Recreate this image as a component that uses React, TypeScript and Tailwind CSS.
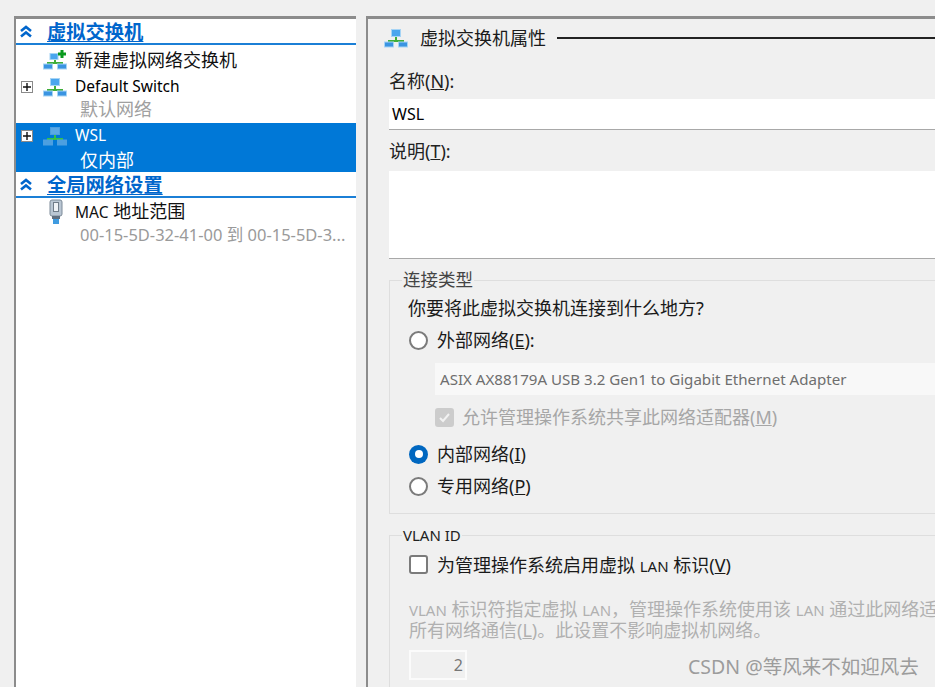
import React from "react";

const FONT = "font-['Noto_Sans','Noto_Sans_CJK_SC',sans-serif]";

function Lat({ children }: { children: React.ReactNode }) {
  return <span className="text-[15.5px]">{children}</span>;
}

function SwitchIcon({ plus = false, dim = false }: { plus?: boolean; dim?: boolean }) {
  const top = dim ? "#5aa9e6" : "#4aa6ee";
  const low = dim ? "#4c9fe0" : "#3a94e2";
  const edge = dim ? "#4c9fe0" : "#a6d4f5";
  return (
    <svg width="24" height="20" viewBox="0 0 24 20">
      <path d="M12 7V13M5 15V13H19V15" stroke={dim ? "#35c04a" : "#3fae3a"} strokeWidth="2" fill="none" />
      {!plus && <rect x="7.5" y="1.5" width="9" height="7" fill={top} stroke={edge} strokeWidth="1" />}
      {plus && <rect x="7" y="3.5" width="8" height="6" fill={top} stroke={edge} strokeWidth="1" />}
      <rect x="0.5" y="14" width="9" height="5" fill={low} stroke={edge} strokeWidth="1" />
      <rect x="14.5" y="14" width="9" height="5" fill={low} stroke={edge} strokeWidth="1" />
      {plus && <path d="M19 0V8M15 4H23" stroke="#0a9a1f" strokeWidth="3" />}
    </svg>
  );
}

function Chevrons() {
  return (
    <svg width="14" height="13" viewBox="0 0 14 13">
      <path d="M2 6L7 2L12 6M2 11.5L7 7.5L12 11.5" stroke="#0066cc" strokeWidth="2.6" fill="none" />
    </svg>
  );
}

function PlusBox() {
  return (
    <div className="flex h-[12px] w-[12px] items-center justify-center border border-[#8a8a8a] bg-white">
      <svg width="8" height="8" viewBox="0 0 8 8">
        <path d="M4 0V8M0 4H8" stroke="#111" strokeWidth="1.4" />
      </svg>
    </div>
  );
}

function MacIcon() {
  return (
    <svg width="14" height="25" viewBox="0 0 14 25">
      <rect x="1" y="1" width="12" height="16" rx="2" fill="#b9c6d3" stroke="#7d8b99" />
      <rect x="4.5" y="3.5" width="5" height="9" fill="#eef2f6" stroke="#6f7c89" />
      <rect x="3" y="17" width="8" height="3" fill="#5f6f80" />
      <rect x="4" y="20" width="6" height="5" fill="#3f9be0" />
    </svg>
  );
}

function Heading({ children }: { children: React.ReactNode }) {
  return (
    <div className="flex h-[26px] items-center border-b-2 border-[#1b7fd6]">
      <div className="flex w-[31px] pl-[3px]">
        <Chevrons />
      </div>
      <span className="pt-[1px] text-[19.3px] leading-none font-bold text-[#0066cc] underline underline-offset-2">{children}</span>
    </div>
  );
}

function Radio({ checked = false }: { checked?: boolean }) {
  return checked ? (
    <div className="flex h-[19px] w-[19px] items-center justify-center rounded-full bg-[#0067c0]">
      <div className="h-[8px] w-[8px] rounded-full bg-white" />
    </div>
  ) : (
    <div className="h-[19px] w-[19px] rounded-full border-2 border-[#7b7b7b] bg-white" />
  );
}

function Option({ checked, children, h }: { checked?: boolean; children: React.ReactNode; h: string }) {
  return (
    <div className={`flex items-center gap-[9px] pl-[19px] text-[18px] leading-none text-[#1a1a1a] ${h}`}>
      <Radio checked={checked} />
      <span>{children}</span>
    </div>
  );
}

export default function App() {
  return (
    <div className={`relative flex h-[687px] w-[935px] gap-[10px] overflow-hidden bg-[#f0f0f0] pt-[16px] pl-[14px] ${FONT}`}>
      {/* Left tree panel */}
      <div className="h-[671px] w-[342px] shrink-0 border-t-[3px] border-l-[2px] border-[#8c8c8c] bg-white">
        <Heading>虚拟交换机</Heading>
        <div className="flex h-[30px] items-center">
          <div className="w-[27px]" />
          <div className="flex w-[32px]">
            <SwitchIcon plus />
          </div>
          <span className="text-[18px] leading-none text-[#111]">新建虚拟网络交换机</span>
        </div>
        <div className="h-[48px]">
          <div className="flex h-[23px] items-center">
            <div className="w-[27px] pl-[5px]">
              <PlusBox />
            </div>
            <div className="flex w-[32px]">
              <SwitchIcon />
            </div>
            <Lat>Default Switch</Lat>
          </div>
          <div className="flex h-[22px] items-center pl-[64px] text-[18px] leading-none text-[#a0a0a0]">默认网络</div>
        </div>
        <div className="h-[49px] bg-[#0078d7] text-white">
          <div className="flex h-[25px] items-center">
            <div className="w-[27px] pl-[5px]">
              <PlusBox />
            </div>
            <div className="flex w-[32px]">
              <SwitchIcon dim />
            </div>
            <Lat>WSL</Lat>
          </div>
          <div className="flex h-[23px] items-center pl-[64px] text-[18px] leading-none">仅内部</div>
        </div>
        <Heading>全局网络设置</Heading>
        <div className="h-[48px]">
          <div className="flex h-[27px] items-center">
            <div className="flex w-[59px] justify-start pl-[33px]">
              <MacIcon />
            </div>
            <span className="text-[18px] leading-none text-[#111]">
              <Lat>MAC</Lat> 地址范围
            </span>
          </div>
          <div className="flex h-[21px] items-center pl-[64px] text-[16.5px] leading-none whitespace-nowrap text-[#9a9a9a]">
            00-15-5D-32-41-00 到 00-15-5D-3...
          </div>
        </div>
      </div>

      {/* Right properties panel */}
      <div className="h-[671px] w-[600px] shrink-0 border-t-[3px] border-l-[2px] border-[#8c8c8c] pl-[21px]">
        <div className="flex h-[38px] items-center">
          <div className="-ml-[5px] flex w-[36px] shrink-0">
            <SwitchIcon />
          </div>
          <span className="text-[18px] leading-none text-[#1a1a1a]">虚拟交换机属性</span>
          <div className="ml-[11px] h-[2px] flex-1 bg-[#222]" />
        </div>
        <div className="flex h-[42px] items-center pt-[6px] text-[18px] leading-none text-[#222]">
          名称(<u>N</u>):
        </div>
        <div className="flex h-[31px] items-center border-b border-[#a8a8a8] bg-white pl-[3px] text-[16px]">
          WSL
        </div>
        <div className="flex h-[41px] items-center text-[18px] leading-none text-[#222]">
          说明(<u>T</u>):
        </div>
        <div className="h-[88px] border-b border-[#a8a8a8] bg-white" />

        <div className="mt-[21px] h-[234px] border border-[#dedede]">
          <div className="-mt-[11px] ml-[12px] flex h-[20px] w-max items-center bg-[#f0f0f0] px-[1px] text-[17.5px] leading-none text-[#444]">
            连接类型
          </div>
          <div className="flex h-[36px] items-center pl-[18px] text-[18px] leading-none text-[#1a1a1a]">
            你要将此虚拟交换机连接到什么地方?
          </div>
          <Option h="h-[28px]">
            外部网络(<u>E</u>):
          </Option>
          <div className="mt-[9px] ml-[45px] flex h-[32px] items-center bg-[#f8f8f8] pl-[5px] text-[15.1px] whitespace-nowrap text-[#6e6e6e]">
            ASIX AX88179A USB 3.2 Gen1 to Gigabit Ethernet Adapter
          </div>
          <div className="flex h-[44px] items-center gap-[8px] pl-[45px] text-[18px] leading-none text-[#a6a6a6]">
            <div className="flex h-[19px] w-[19px] items-center justify-center rounded-[3px] bg-[#cccccc]">
              <svg width="13" height="13" viewBox="0 0 13 13">
                <path d="M2 7L5 10L11 3" stroke="#f2f2f2" strokeWidth="2" fill="none" />
              </svg>
            </div>
            <span>
              允许管理操作系统共享此网络适配器(<u>M</u>)
            </span>
          </div>
          <Option checked h="h-[30px]">
            内部网络(<u>I</u>)
          </Option>
          <Option h="h-[34px]">
            专用网络(<u>P</u>)
          </Option>
        </div>

        <div className="mt-[21px] h-[170px] border border-[#dedede]">
          <div className="-mt-[11px] ml-[12px] flex h-[20px] w-max items-center bg-[#f0f0f0] px-[1px] text-[15px] leading-none text-[#222]">
            VLAN ID
          </div>
          <div className="flex h-[39px] items-center gap-[9px] pl-[19px] text-[18px] leading-none text-[#1a1a1a]">
            <div className="h-[19px] w-[19px] rounded-[3px] border-2 border-[#7b7b7b] bg-white" />
            <span>
              为管理操作系统启用虚拟 <span className="text-[15px]">LAN</span> 标识(<u>V</u>)
            </span>
          </div>
          <div className="mt-[15px] pl-[19px] text-[18px] leading-[20px] whitespace-nowrap text-[#b0b0b0]">
            <div>
              <span className="text-[15px]">VLAN</span> 标识符指定虚拟 <span className="text-[15px]">LAN</span>，管理操作系统使用该 <span className="text-[15px]">LAN</span> 通过此网络适
            </div>
            <div>所有网络通信(<u>L</u>)。此设置不影响虚拟机网络。</div>
          </div>
          <div className="mt-[10px] ml-[19px] flex h-[30px] w-[58px] items-center justify-end border-2 border-[#fbfbfb] pr-[2px] text-[16px] text-[#777]">
            2
          </div>
        </div>
      </div>

      <div className="absolute top-[655px] left-[688px] text-[19.5px] leading-[24px] whitespace-nowrap text-[#9c9c9c]">
        CSDN @等风来不如迎风去
      </div>
    </div>
  );
}
